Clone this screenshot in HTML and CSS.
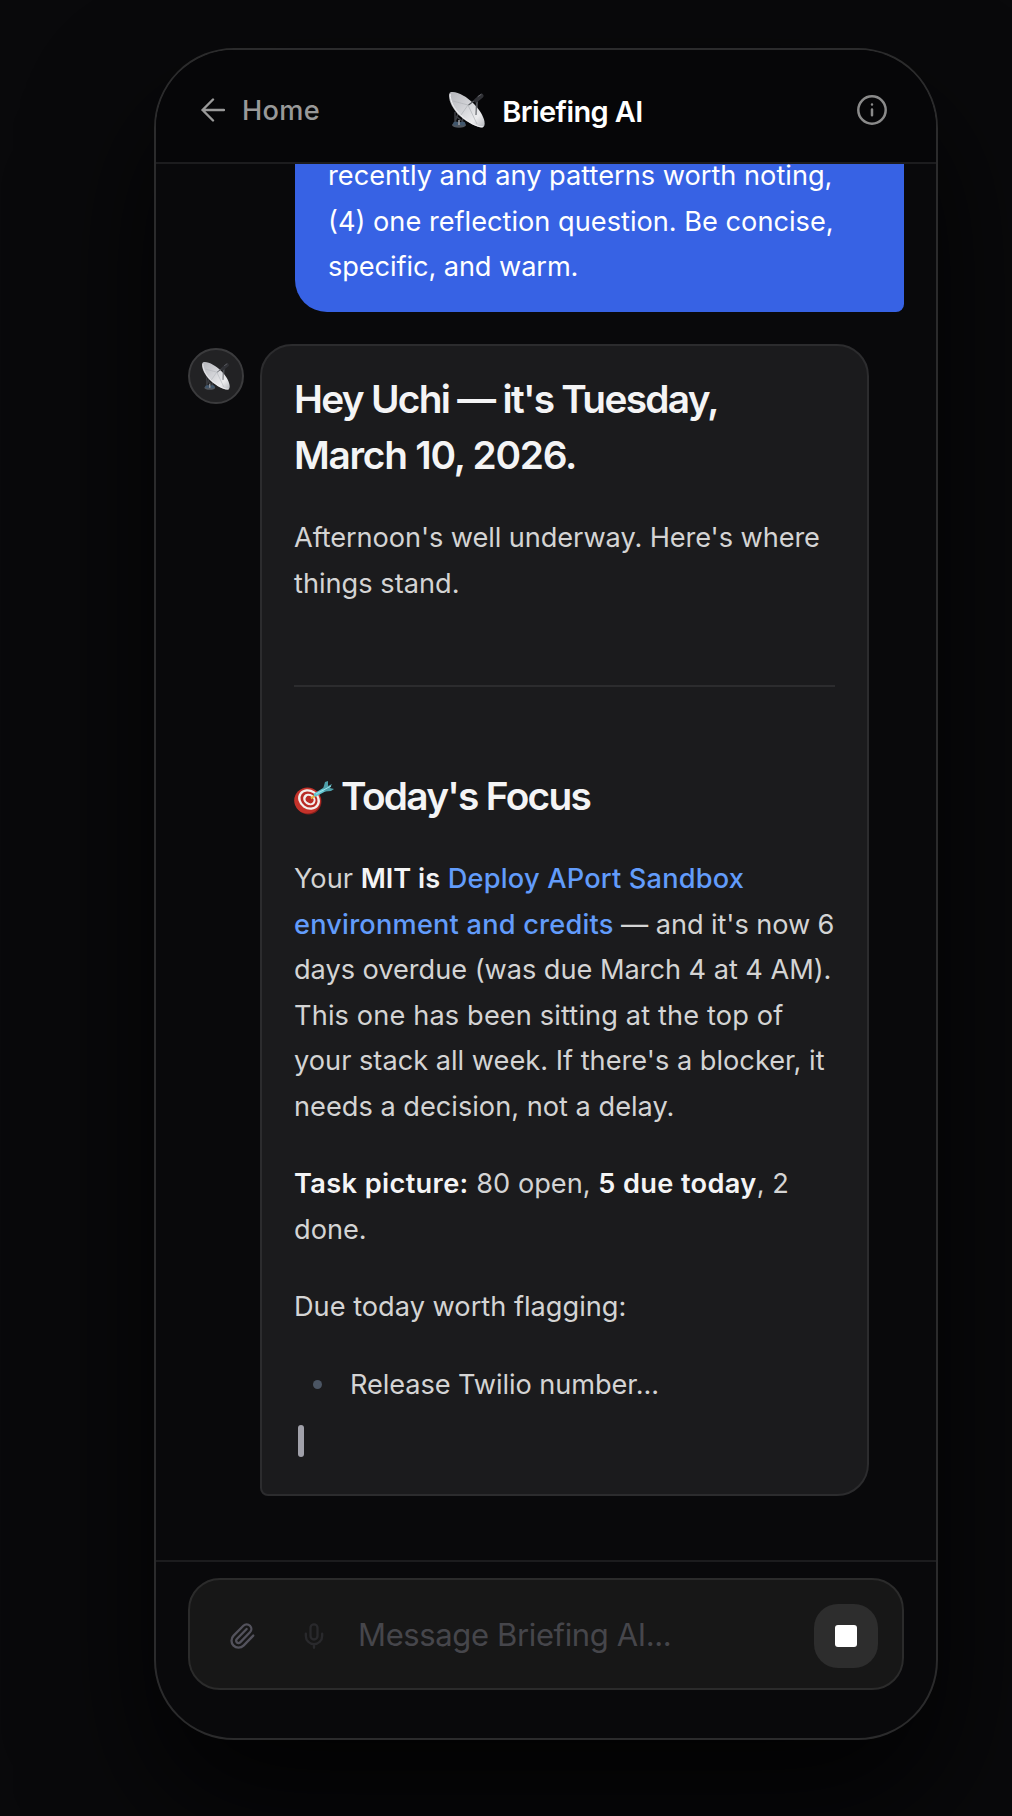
FILE: index.html
```html
<!DOCTYPE html>
<html lang="en">
<head>
<meta charset="utf-8">
<title>Briefing AI</title>
<link rel="stylesheet" href="styles.css">
</head>
<body>
<svg class="sprite" aria-hidden="true">
  <defs>
    <linearGradient id="dish-fill" x1="0" y1="0" x2="1" y2="1">
      <stop offset="0" stop-color="#b4b5ba"/>
      <stop offset=".45" stop-color="#d3d4d8"/>
      <stop offset=".75" stop-color="#ececee"/>
      <stop offset="1" stop-color="#b4b6bb"/>
    </linearGradient>
    <symbol id="dish" viewBox="0 0 36 36">
      <path d="M6 20v10M9 22l-3 8M14 26l-1 5M7 24l7 6" stroke="#3b3d42" stroke-width="1.5" fill="none"/>
      <ellipse cx="10" cy="33" rx="7" ry="2.8" fill="#50565e"/>
      <ellipse cx="7" cy="31.5" rx="2.8" ry="2" fill="#40566c"/>
      <ellipse cx="13.5" cy="31.5" rx="2.8" ry="2" fill="#40566c"/>
      <path d="M10 28v5" stroke="#9a9ea4" stroke-width="1.6"/>
      <path d="M28.500 8l-1 18" stroke="#4f5155" stroke-width="1.2" fill="none"/>
      <path d="M1 .5C7-1.500 17 4 25 12S38 31 34.500 35C31 37 20 32 11 24S-2 4 1 .5Z" fill="url(#dish-fill)"/>
      <path d="M1.200 2C1 9 5 17 12 23.500S29 35.500 34 34.800" stroke="#f1f1f3" stroke-width="1" fill="none"/>
      <path d="M4 9L19 13M19 13L12 23M19 13l9 19" stroke="#b0b3b8" stroke-width=".7" fill="none"/>
      <path d="M19.500 13L27 7.500M27.500 9l-.5 14" stroke="#55585d" stroke-width="1.100" fill="none"/>
      <path d="M27 8.500L32.500 3.800" stroke="#303136" stroke-width="4.200" stroke-linecap="round"/>
      <path d="M29 4.500l3-2" stroke="#65666b" stroke-width="1" stroke-linecap="round"/>
    </symbol>
    <symbol id="target" viewBox="0 0 40 34">
      <ellipse cx="14.500" cy="20.500" rx="13" ry="13" fill="#851f1b"/>
      <ellipse cx="13.500" cy="19.500" rx="13.300" ry="13" fill="#c4322a"/>
      <g transform="rotate(35 15 18.500)">
        <ellipse cx="15" cy="18.500" rx="11.400" ry="9.800" fill="#f3efec"/>
        <ellipse cx="15" cy="18.500" rx="9" ry="7.500" fill="#b92b25"/>
        <ellipse cx="15.300" cy="18.300" rx="6.600" ry="5.400" fill="#f3efec"/>
        <ellipse cx="15.500" cy="18.200" rx="4.200" ry="3.300" fill="#b92b25"/>
      </g>
      <path d="M17 17.500l4-3" stroke="#e8b53a" stroke-width="2"/>
      <path d="M20 12.500L30 6.500l2 3.500-10 5.500q-3 .5-2-3Z" fill="#62c4cf"/>
      <path d="M29 8L31 1l3-1 0 5 4-2-2 4 4 1-3 2-6 .5Z" fill="#4e9fa9"/>
      <path d="M22 13L37 5" stroke="#9be6ec" stroke-width="1"/>
    </symbol>
  </defs>
</svg>

<main class="phone">
  <header class="topbar">
    <a class="back">
      <svg class="back-icon" viewBox="0 0 24 24"><path d="M23 12H1.500M12 1.500L1.500 12 12 22.500"/></svg>
      <span>Home</span>
    </a>
    <h1 class="title"><svg class="title-emoji"><use href="#dish"/></svg><span>Briefing AI</span></h1>
    <svg class="info" viewBox="0 0 30 30"><circle cx="15" cy="15" r="13.700"/><path d="M15 14.500v5.700M15 9.500v.1"/></svg>
  </header>

  <section class="chat">
    <div class="bubble">recently and any patterns worth noting,<br>(4) one reflection question. Be concise,<br><span class="tight">specific, and warm.</span></div>

    <div class="reply">
      <div class="avatar"><svg><use href="#dish"/></svg></div>
      <article class="card">
        <h2>Hey Uchi — it's Tuesday,<br><span class="numeric">March 10, 2026.</span></h2>
        <p><span class="tight">Afternoon's well underway. Here's where</span><br>things stand.</p>
        <hr>
        <h2><svg class="target"><use href="#target"/></svg>Today's Focus</h2>
        <p>Your <strong class="plain">MIT is</strong> <a>Deploy APort Sandbox<br>environment and credits</a><span class="tight"> — and it's now 6</span><br><span class="snug">days overdue (was due March 4 at 4 AM).</span><br><span class="loose">This one has been sitting at the top of</span><br>your stack all week. If there's a blocker, it<br>needs a decision, not a delay.</p>
        <p><strong>Task picture:</strong> 80 open, <strong>5 due today</strong>, 2<br>done.</p>
        <p>Due today worth flagging:</p>
        <ul><li class="tight">Release Twilio number...</li></ul>
        <span class="caret"></span>
      </article>
    </div>
  </section>

  <footer class="composer">
    <div class="field">
      <svg class="clip" viewBox="0 0 24 24"><path d="m16 6-8.414 8.586a2 2 0 0 0 2.829 2.829l8.414-8.586a4 4 0 1 0-5.657-5.657l-8.379 8.551a6 6 0 1 0 8.485 8.485l8.379-8.551"/></svg>
      <svg class="mic" viewBox="0 0 24 24"><path d="M12 19v3M19 10v2a7 7 0 0 1-14 0v-2"/><rect x="9" y="2" width="6" height="13" rx="3"/></svg>
      <span class="placeholder">Message Briefing AI...</span>
      <button class="stop" aria-label="Stop"><span></span></button>
    </div>
  </footer>
</main>
</body>
</html>
```
FILE: styles.css
```css
* { box-sizing: border-box; }

body {
  margin: 0;
  height: 1816px;
  padding: 48px 0 0 154px;
  overflow: hidden;
  background: #09090b;
  color: #d4d4d4;
  font-family: Inter, "Liberation Sans", sans-serif;
}

.sprite { position: absolute; width: 0; height: 0; }

.phone {
  display: flex;
  flex-direction: column;
  width: 784px;
  height: 1692px;
  overflow: hidden;
  border: 2px solid #2b2b2c;
  border-radius: 80px;
  background: #09090b;
  box-shadow: 0 64px 128px rgba(0, 0, 0, .8);
}

.topbar {
  display: grid;
  grid-template-columns: 1fr auto 1fr;
  align-items: center;
  height: 114px;
  flex: none;
  padding: 8px 49px 0 45px;
  border-bottom: 2px solid #1c1c1e;
  background: #060608;
}

.back {
  display: flex;
  align-items: center;
  gap: 17px;
  color: #999;
  font-size: 27.2px;
  font-weight: 500;
  letter-spacing: .3px;
}

.back-icon { width: 24px; height: 24px; fill: none; stroke: currentColor; stroke-width: 2.4; stroke-linecap: round; stroke-linejoin: round; }

.title {
  display: flex;
  align-items: center;
  gap: 17px;
  margin: 0 0 0 4px;
  color: #fff;
  font-size: 29px;
  font-weight: 600;
  letter-spacing: -.6px;
}

.title span { padding-top: 2px; }

.title-emoji { width: 36px; height: 36px; }

.info { justify-self: end; width: 30px; height: 30px; fill: none; stroke: #8a8a8a; stroke-width: 2.5; stroke-linecap: round; }

.chat {
  display: flex;
  flex: 1;
  flex-direction: column;
  justify-content: flex-end;
  gap: 32px;
  min-height: 0;
  padding: 0 32px 64px;
  overflow: hidden;
}

.bubble {
  align-self: flex-end;
  width: 609px;
  padding: 24px 32px 22.5px 33px;
  border-radius: 32px 32px 8px 32px;
  background: #3762e4;
  color: #fff;
  font-size: 27.2px;
  line-height: 45.5px;
  white-space: nowrap;
}

.reply { display: flex; gap: 16px; }

.avatar {
  display: flex;
  align-items: center;
  justify-content: center;
  width: 56px;
  height: 56px;
  margin-top: 4px;
  border: 2px solid #3b3b3d;
  border-radius: 50%;
  background: #222224;
}

.avatar svg { width: 28px; height: 28px; }

.card {
  width: 609px;
  height: 1152px;
  padding: 25px 32px 0;
  border: 2px solid #2c2c2e;
  border-radius: 32px 32px 32px 8px;
  background: #1b1b1d;
  font-size: 27.2px;
  line-height: 45.5px;
  white-space: nowrap;
}

.card h2 { margin: 0 0 32px; color: #f4f4f5; font-size: 38.8px; font-weight: 600; line-height: 56px; letter-spacing: -1.7px; }
.card .numeric { letter-spacing: -1.25px; }
.card p { margin: 0 0 32px; }
.card hr { height: 2px; margin: 79px 0 81px; border: 0; background: #2c2c2e; }
.card strong { color: #f4f4f5; font-weight: 600; letter-spacing: .36px; }
.card strong.plain { letter-spacing: 0; }
.card a { color: #629cfb; font-weight: 500; letter-spacing: .2px; }
.card ul { margin: 0; padding: .4px 0 0; list-style: none; }
.card li { display: flex; align-items: center; gap: 28px; padding-left: 19px; }
.card li::before { content: ""; width: 9px; height: 9px; border-radius: 50%; background: #4b5563; }

.tight { letter-spacing: -.09px; }
.snug { letter-spacing: -.04px; }
.loose { letter-spacing: .13px; }

.target { width: 40px; height: 34px; margin-right: 7px; vertical-align: -5px; }

.caret { display: block; width: 6px; height: 32px; margin: 18px 0 0 4px; border-radius: 3px; background: #a1a1aa; }

.composer { flex: none; height: 178px; padding: 16px 32px 0; border-top: 2px solid #1c1c1e; }

.field {
  display: flex;
  align-items: center;
  height: 112px;
  padding: 0 24px 0 38px;
  border: 2px solid #2b2b2b;
  border-radius: 32px;
  background: #171717;
}

.clip, .mic { width: 28px; height: 28px; margin-top: 4px; fill: none; stroke-width: 2; stroke-linecap: round; stroke-linejoin: round; }
.clip { margin-right: 44px; stroke: #53525c; }
.mic { margin-right: 30px; stroke: #29292c; }

.placeholder { flex: 1; color: #46464b; font-size: 31px; letter-spacing: -.37px; }

.stop { display: grid; place-items: center; width: 64px; height: 64px; margin-top: 4px; padding: 0; border: 0; border-radius: 24px; background: #2d2d2d; }
.stop span { width: 22px; height: 22px; border-radius: 3px; background: #fff; }
```
